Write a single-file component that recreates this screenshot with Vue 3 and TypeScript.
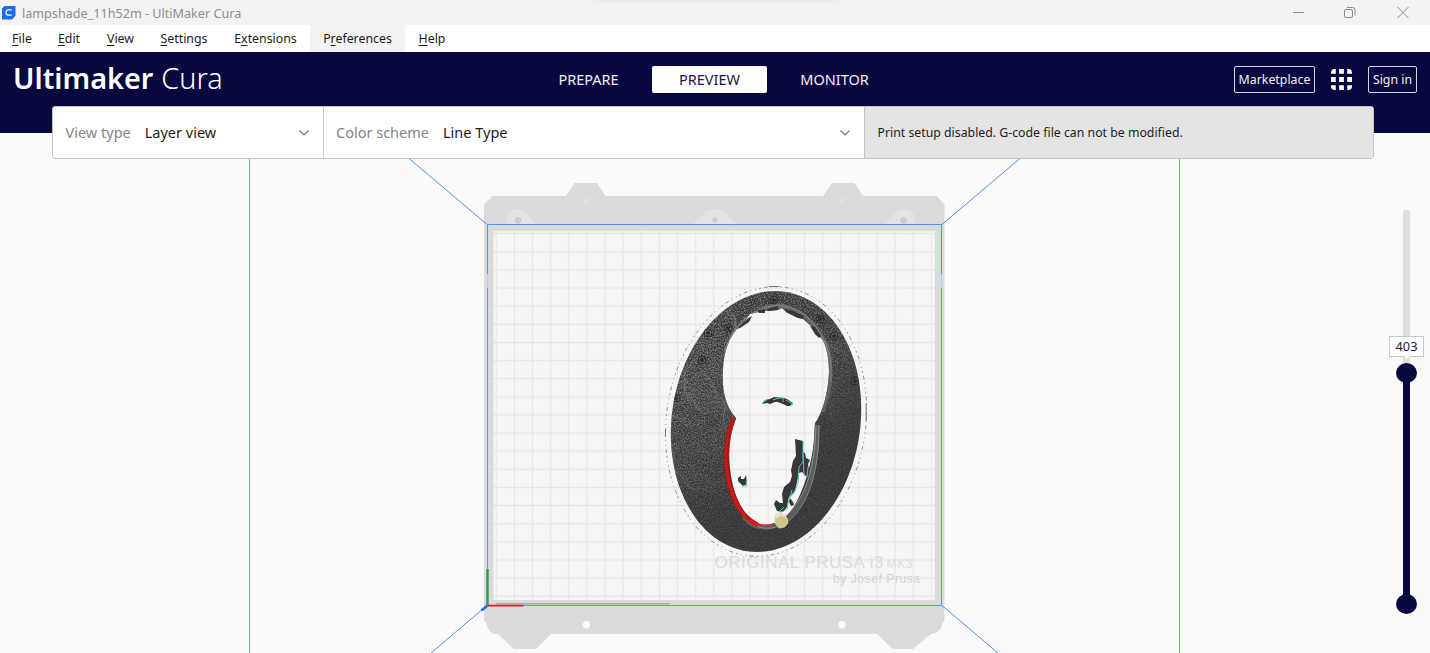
<script setup lang="ts">
interface MenuEntry {
  before: string
  key: string
  after: string
  width: number
  active?: boolean
}

const menu: MenuEntry[] = [
  { before: '', key: 'F', after: 'ile', width: 44 },
  { before: '', key: 'E', after: 'dit', width: 50 },
  { before: '', key: 'V', after: 'iew', width: 53 },
  { before: '', key: 'S', after: 'ettings', width: 74 },
  { before: 'E', key: 'x', after: 'tensions', width: 89 },
  { before: 'P', key: 'r', after: 'eferences', width: 95, active: true },
  { before: '', key: 'H', after: 'elp', width: 54 },
]

const stages = ['PREPARE', 'PREVIEW', 'MONITOR']
const activeStage = 'PREVIEW'
const layer = 403

// Sheared ellipse around the centre of the lampshade
function ring(rx: number, ry: number): string {
  const points: string[] = []
  for (let i = 0; i < 120; i++) {
    const t = (i / 120) * Math.PI * 2
    const x = 766 + rx * Math.cos(t) + 9 * Math.sin(t)
    const y = 421.5 - ry * Math.sin(t)
    points.push(`${x.toFixed(1)} ${y.toFixed(1)}`)
  }
  return `M${points.join('L')}Z`
}

// Uneven closed loop, like a height line on the printed surface
function loop(cx: number, cy: number, rx: number, ry: number): string {
  const points: string[] = []
  for (let i = 0; i < 90; i++) {
    const t = (i / 90) * Math.PI * 2
    const k = 1 + 0.14 * Math.sin(3 * t + rx / 9) + 0.07 * Math.sin(7 * t + rx / 5) + 0.04 * Math.sin(13 * t)
    points.push(`${(cx + rx * k * Math.cos(t)).toFixed(1)} ${(cy + ry * k * Math.sin(t)).toFixed(1)}`)
  }
  return `M${points.join('L')}Z`
}

const outer = ring(94.8, 130.5)
const brim = ring(100.2, 134.8)
const hole =
  'M782 308L778 310L763 311L750 314L742 325L736 330C725 344 722 362 723 384C724 399 729 410 736 418C730 434 728 450 730 468C732 487 737 502 745 514C751 523 757 526 765 526C778 526 788 517 796 503C807 483 814 454 815 427L815 423C822 414 828 394 829 372C829 352 824 340 820 337L816 335L812 327L803 319L796 317L786 312Z'
const contours = [
  ...Array.from({ length: 18 }, (_, i) => loop(691, 440, i * 3.3 + 3, i * 3.2 + 3)),
  ...Array.from({ length: 18 }, (_, i) => loop(702, 360, i * 2.8 + 3, i * 3 + 3)),
  ...Array.from({ length: 16 }, (_, i) => loop(848, 378, i * 2.8 + 2, i * 3.6 + 3)),
]
const knots = [
  { x: 702, y: 360 },
  { x: 708, y: 333 },
  { x: 728, y: 328 },
  { x: 774, y: 300 },
  { x: 820, y: 319 },
  { x: 834, y: 336 },
  { x: 855, y: 381 },
  { x: 676, y: 398 },
]
</script>

<template>
  <div class="window">
    <header class="titlebar">
      <svg class="logo" viewBox="0 0 14 14">
        <path d="M3 0H13V9.5L10 13H0V3Z" fill="#1a6cf0" stroke="#1a6cf0" stroke-linejoin="round" />
        <path d="M9.8 3.9H6.2Q4.2 3.9 4.2 5.8V7.2Q4.2 9.1 6.2 9.1H9.8" fill="none" stroke="#fff" stroke-width="1.2" />
      </svg>
      <span class="title">lampshade_11h52m - UltiMaker Cura</span>
      <div class="snap"></div>
      <svg class="controls" width="120" height="16" viewBox="0 0 120 16" fill="none" stroke="#8b8b8b">
        <path d="M0 7.500H11" />
        <rect x="51.500" y="4.500" width="8" height="8" rx="1.500" />
        <path d="M54 2.500H59.500Q62 2.500 62 5V10.500" />
        <path d="M104.500 2L115.500 13M115.500 2L104.500 13" />
      </svg>
    </header>

    <nav class="menubar">
      <div
        v-for="m in menu"
        :key="m.key"
        class="menu"
        :class="{ active: m.active }"
        :style="{ width: m.width + 'px' }"
      ><span>{{ m.before }}<u>{{ m.key }}</u>{{ m.after }}</span></div>
    </nav>

    <div class="header">
      <div class="brand"><b>Ultimaker</b><span>Cura</span></div>
      <div class="stages">
        <div v-for="s in stages" :key="s" class="stage" :class="{ selected: s === activeStage }">{{ s }}</div>
      </div>
      <div class="account">
        <div class="btn market">Marketplace</div>
        <svg width="21" height="21" viewBox="0 0 22 22" fill="#fff">
          <path d="M5 0V5H0V4Q0 0 4 0ZM8.500 0H13.500V5H8.500ZM17 0H18Q22 0 22 4V5H17ZM0 8.500H5V13.500H0ZM8.500 8.500H13.500V13.500H8.500ZM17 8.500H22V13.500H17ZM0 17H5V22H4Q0 22 0 18ZM8.500 17H13.500V22H8.500ZM17 17H22V18Q22 22 18 22H17Z" />
        </svg>
        <div class="btn signin">Sign in</div>
      </div>
    </div>

    <main class="viewport">
      <svg class="scene" width="1430" height="520" viewBox="0 133 1430 520">
        <defs>
          <pattern id="fine" x="496.300" y="233.700" width="1.813" height="1.813" patternUnits="userSpaceOnUse">
            <path d="M0 .3H1.813M.3 0V1.813" stroke="#f1f1f1" stroke-width=".3" />
          </pattern>
          <pattern id="grid" x="487.200" y="224.600" width="18.130" height="18.130" patternUnits="userSpaceOnUse">
            <path d="M0 9.065H18.130M9.065 0V18.130" stroke="#d8d8d8" stroke-opacity=".5" stroke-width="1.200" />
          </pattern>
          <filter id="grain" x="0" y="0" width="1" height="1">
            <feTurbulence type="fractalNoise" baseFrequency=".7" numOctaves="2" seed="7" />
            <feColorMatrix values="0 0 0 0 .6  0 0 0 0 .6  0 0 0 0 .6  1.200 0 0 0 -.48" />
          </filter>
          <linearGradient id="fade" gradientUnits="userSpaceOnUse" x1="690" y1="370" x2="815" y2="530">
            <stop offset="0" stop-color="#fff" />
            <stop offset=".4" stop-color="#fff" stop-opacity=".6" />
            <stop offset=".75" stop-color="#fff" stop-opacity=".08" />
          </linearGradient>
          <clipPath id="body"><path :d="outer + hole" clip-rule="evenodd" /></clipPath>
          <mask id="light" maskUnits="userSpaceOnUse" x="660" y="280" width="210" height="280">
            <rect x="660" y="280" width="210" height="280" fill="url(#fade)" />
          </mask>
        </defs>

        <path d="M249.500 133V653M1179.500 133V653" stroke="#6aa1e8" />

        <!-- steel sheet -->
        <path
          fill="#dbdbdb"
          d="M484 204L492.500 196H566L574.500 183H597L605.500 196H823L832 183H854.500L863 196H936.500L944.500 204V621Q941.500 623 941.500 627Q938 634 931 634L913 649H892.500L877 634H551L536 649H514L498 634H495Q489 633 487 626Q486.500 622 484 621Z"
        />
        <g fill="#e3e3e3">
          <path d="M507 224V215L513 209.500H522.500L536 224ZM693 224L708 209.500H722L737 224ZM885 224L899 209.500H909L914 215V224Z" />
        </g>
        <g fill="#d0d0d0" stroke="#c4c4c4">
          <circle cx="518" cy="220.500" r="2.700" /><circle cx="715" cy="220" r="2" /><circle cx="903.500" cy="220.500" r="2.700" />
        </g>
        <circle cx="586.500" cy="201" r="3" fill="#e0e0e0" /><circle cx="842" cy="201" r="3" fill="#e0e0e0" />
        <circle cx="586.500" cy="624.700" r="3.700" fill="#fafafa" /><circle cx="842" cy="624.700" r="3.700" fill="#fafafa" />

        <!-- build volume edges -->
        <path
          d="M379 133L487 224.500M1050 133L942 224.500M487 605.500L431 653M942 605.500L998 653"
          stroke="#4c92f0"
          fill="none"
        />

        <!-- print bed -->
        <rect x="487" y="224" width="455" height="381" fill="#dadada" />
        <rect x="493.500" y="231" width="441.500" height="369" fill="#f8f8f8" />
        <rect x="493.500" y="231" width="441.500" height="369" fill="url(#fine)" />
        <rect x="488" y="225" width="453" height="379" fill="url(#grid)" />
        <g font-family="'Liberation Sans', Arial, sans-serif" fill="#dcdcdc">
          <text x="714.500" y="568" font-size="17" textLength="169">ORIGINAL PRUSA i3</text>
          <text x="886.500" y="568" font-size="12" textLength="26">MK3</text>
          <text x="833" y="582.500" font-size="12" textLength="87" fill="#d3d3d3">by Josef Prusa</text>
        </g>
        <path d="M496 603.700H670" stroke="#ababab" stroke-width="1.500" />
        <path d="M487.500 274V224.500H941.500V274" fill="none" stroke="#4c92f0" />
        <path d="M487.500 274V288M941.500 274V288" stroke="#b4cdf0" />
        <path d="M487.500 288V605.500H941.500V288" fill="none" stroke="#6496e0" />
        <path d="M487.500 569V605" stroke="#22a045" stroke-width="2.400" />
        <path d="M488 605.700H523.500" stroke="#d82028" stroke-width="1.800" />
        <path d="M481.500 610.500L487.500 605.500" stroke="#1c6aed" stroke-width="2.500" />

        <!-- sliced model -->
        <path :d="brim" fill="none" stroke="#777" stroke-width=".8" stroke-dasharray="4 3 2 3 1 4 1 3" />
        <path d="M769 286.500H779M866.200 403V420M665.500 429V436" stroke="#666" stroke-width=".9" />
        <path :d="outer + hole" fill="#363636" fill-rule="evenodd" />
        <g clip-path="url(#body)">
          <g mask="url(#light)">
            <rect x="660" y="280" width="210" height="280" filter="url(#grain)" />
            <g fill="none" stroke="#9a9a9a" stroke-width=".6" opacity=".5">
              <path v-for="(d, i) in contours" :key="i" :d="d" />
            </g>
          </g>
          <g fill="none" stroke="#1f1f1f" stroke-width="1" opacity=".75">
            <g v-for="k in knots" :key="k.x">
              <circle :cx="k.x" :cy="k.y" r="1.500" fill="#222" />
              <circle :cx="k.x" :cy="k.y" r="4" />
            </g>
          </g>
          <rect x="660" y="280" width="210" height="280" filter="url(#grain)" opacity=".25" />
          <g fill="none">
            <path d="M725 357C730 334 744 319 760 310C790 296 818 322 828 350C833 378 829 394 822 412" stroke="#777" stroke-width="4.500" opacity=".6" />
            <path d="M725 350C732 327 750 310 772 306C803 302 825 331 831 362V382" stroke="#a0a0a0" stroke-width=".6" />
          </g>
        </g>

        <!-- inner wall lines -->
        <g fill="none">
          <path d="M817 425C817 468 808 497 790 516C774 531 756 531 744 517" stroke="#5c5c5c" stroke-width="5" />
          <path d="M816 425C815 468 806 495 789 513C774 528 759 529 746 516M819 425C819 470 810 500 792 518C775 533 755 531 742 515" stroke="#a5a5a5" stroke-width=".7" />
          <path d="M734 418C723 443 724 478 736 502C742 514 748 520 758 525" stroke="#cf1717" stroke-width="4.400" />
          <path d="M735 418C724 444 726 477 738 501C744 514 750 520 758 524" stroke="#861717" stroke-width=".8" />
          <path d="M732 419C721 446 722 479 734 502" stroke="#7c2020" stroke-width=".7" />
          <path d="M750 520Q763 529 779 522" stroke="#e62222" stroke-width="1.300" />
        </g>

        <!-- overhangs and skirts inside the opening -->
        <g fill="#373737">
          <path d="M737 329L747 319L752 316L749 322L740 328ZM757 310L765 309V313L759 313ZM767 309L778 306V310L768 311ZM785 309L793 311L804 316L803 319L798 318L786 312ZM810 326L815 327L821 336L819 338L815 334Z" />
          <path d="M762 404L765 400L770 399L774 397L784 398L787 399L793 403L790 406L787 406L783 404L778 402L775 402L770 404L767 403Z" />
          <path d="M738 478L741 476V479L744 479L746 475L747 484L743 486L738 481Z" />
          <path d="M795 439L803 441V452L805 453L806 458L810 460L808 464L809 470L807 477L802 472L799 473L797 482L795 491L789 497L787 507L783 512L777 511L774 504L776 500L780 503L783 503L782 494L784 487L790 482L792 476L791 470L793 461L796 456Z" />
          <path d="M790 498L793 502L794 505L791 506L789 502Z" />
        </g>
        <g fill="none" stroke="#55c6c6" stroke-width="1">
          <path d="M763 402L767 400M773 400L779 398H783V402M786 400L793 404L790 406M742 486H747L746 481" />
          <path d="M803 441V462L799 467L798 483L794 493L789 498L787 509L780 513M803 452L804 475L807 477L808 467M789 500L792 490M779 512L784 507" />
        </g>
        <path d="M775 514L780 512L786 515L787 522L779 525L774 520Z" fill="#e4ded1" opacity=".9" />
        <path d="M775 519L781 515.500L787 518L788 523L784.500 527L779 528L775 523Z" fill="#cfc388" stroke="#e8dda6" stroke-width=".8" />
      </svg>

      <section class="panel">
        <div class="cell view">
          <span class="label">View type</span><span class="value">Layer view</span>
          <svg class="chev" viewBox="0 0 12 8"><path d="M1.500 1.500L6 6L10.500 1.500" /></svg>
        </div>
        <div class="cell scheme">
          <span class="label">Color scheme</span><span class="value">Line Type</span>
          <svg class="chev" viewBox="0 0 12 8"><path d="M1.500 1.500L6 6L10.500 1.500" /></svg>
        </div>
        <div class="cell notice">Print setup disabled. G-code file can not be modified.</div>
      </section>

      <aside class="slider">
        <div class="rail"></div>
        <div class="tip">{{ layer }}</div>
        <div class="gap"></div>
        <div class="knob"></div>
        <div class="range"></div>
        <div class="knob"></div>
      </aside>
    </main>
  </div>
</template>

<style>
body { overflow: hidden; }
</style>

<style scoped>
.window {
  width: 1430px;
  height: 653px;
  display: flex;
  flex-direction: column;
  overflow: hidden;
  background: #fafafa;
  font-family: "Noto Sans", "Open Sans", sans-serif;
  color: #1c1c1c;
  white-space: nowrap;
}
.titlebar {
  height: 25px;
  box-sizing: border-box;
  flex: none;
  display: flex;
  align-items: center;
  background: #f3f3f3;
  padding: 0 17px 0 2px;
  position: relative;
}
.logo { width: 14px; height: 14px; margin-right: 6px; }
.title { font-size: 12.62px; color: #8c8c8c; line-height: 25px; padding-top: 1px; }
.snap {
  position: absolute;
  left: 594px;
  top: -4px;
  width: 244px;
  height: 4px;
  box-shadow: 0 0 5px #dedede;
}
.controls { margin-left: auto; }
.menubar {
  height: 27px;
  flex: none;
  display: flex;
  background: #fff;
}
.menu {
  display: flex;
  justify-content: center;
  font-size: 12.35px;
  line-height: 28px;
}
.menu u { text-underline-offset: 2px; text-decoration-thickness: 1px; }
.menu.active { background: #f3f3f3; }
.header {
  height: 81px;
  flex: none;
  box-sizing: border-box;
  padding: 0 13px;
  background: #08073f;
  display: grid;
  grid-template-columns: 1fr auto 1fr;
  grid-template-rows: 54px;
  align-items: center;
}
.brand { color: #fff; font-size: 28.8px; line-height: 52px; height: 54px; display: flex; gap: 8px; }
.brand b { font-weight: 600; }
.brand span { font-weight: 300; }
.stages { display: flex; padding-right: 7px; }
.stage {
  width: 115px;
  height: 27px;
  line-height: 26px;
  text-align: center;
  color: #eeeef5;
  font-size: 14.5px;
  border-radius: 2px;
}
.stage.selected { background: #fff; color: #17164f; margin: 0 10px 0 6px; }
.account { display: flex; justify-content: flex-end; align-items: center; gap: 16px; }
.btn {
  box-sizing: border-box;
  height: 27px;
  line-height: 25px;
  border: 1px solid #d5d5e2;
  border-radius: 2px;
  color: #f1f1f6;
  font-size: 12.35px;
  text-align: center;
}
.market { width: 81px; }
.signin { width: 49px; }
.viewport { flex: 1; position: relative; }
.scene { display: block; }
.panel {
  position: absolute;
  left: 52px;
  top: -27px;
  width: 1322px;
  height: 53px;
  box-sizing: border-box;
  display: flex;
  border: 1px solid #c3c3c5;
  border-radius: 3px;
  background: #fff;
  overflow: hidden;
}
.cell { display: flex; align-items: center; box-sizing: border-box; font-size: 14.5px; }
.view { width: 271px; border-right: 1px solid #c8c8c8; padding: 0 13px 0 12.5px; }
.scheme { width: 541px; border-right: 1px solid #c3c3c3; padding: 0 13px 0 12px; }
.notice { flex: 1; background: #e4e4e4; padding-left: 12.5px; font-size: 12.3px; }
.label { color: #858585; margin-right: 14px; }
.label, .value { padding-bottom: 2px; }
.chev { width: 12px; height: 8px; margin-left: auto; fill: none; stroke: #777; stroke-width: 1.200; }
.slider {
  position: absolute;
  left: 1388px;
  top: 77px;
  width: 37px;
  display: flex;
  flex-direction: column;
  align-items: center;
}
.rail { width: 7px; height: 126px; background: #dfdfdf; border-radius: 3px 3px 0 0; }
.tip {
  width: 35px;
  height: 21px;
  box-sizing: border-box;
  border: 1px solid #c8c8c8;
  background: #fff;
  font-size: 12.8px;
  line-height: 19px;
  text-align: center;
  position: relative;
}
.tip::after {
  content: "";
  position: absolute;
  left: 13px;
  top: 18px;
  border: 4px solid transparent;
  border-top-color: #fff;
  border-bottom: 0;
}
.gap { width: 7px; height: 6px; background: #dfdfdf; }
.knob { width: 21px; height: 20px; border-radius: 50%; background: #08073f; }
.range { width: 7px; height: 215px; margin: -2px 0; background: #08073f; }
</style>
